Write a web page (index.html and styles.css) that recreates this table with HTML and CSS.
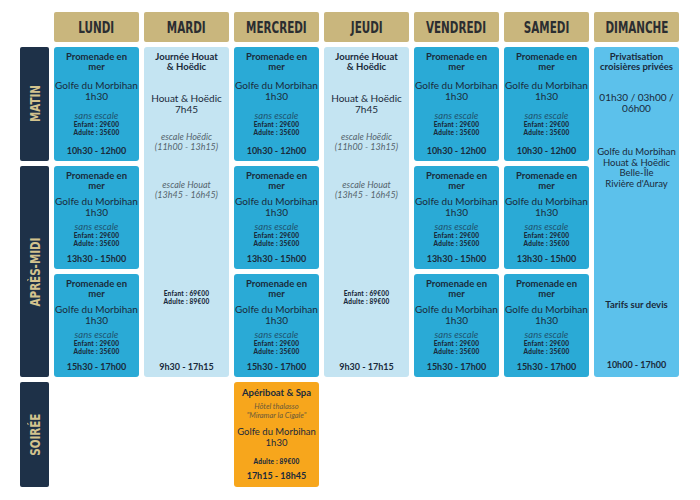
FILE: index.html
```html
<!DOCTYPE html>
<html lang="fr">
<head>
<meta charset="utf-8">
<title>Planning</title>
<link rel="stylesheet" href="styles.css">
</head>
<body>
<div class="planning">
  <div class="corner"></div>
  <div class="day"><span>LUNDI</span></div>
  <div class="day"><span>MARDI</span></div>
  <div class="day"><span>MERCREDI</span></div>
  <div class="day"><span>JEUDI</span></div>
  <div class="day"><span>VENDREDI</span></div>
  <div class="day"><span>SAMEDI</span></div>
  <div class="day"><span>DIMANCHE</span></div>

  <div class="period r1"><span>MATIN</span></div>
  <div class="period r2 span2"><span>APRÈS-MIDI</span></div>
  <div class="period r4"><span>SOIRÉE</span></div>

  <!-- MATIN -->
  <div class="cell promo c1 r1">
    <div class="ttl">Promenade en<br>mer</div>
    <div class="place">Golfe du Morbihan<br>1h30</div>
    <div class="esc"><div class="it">sans escale</div><div class="price">Enfant : 29€00<br>Adulte : 35€00</div></div>
    <div class="time">10h30 - 12h00</div>
  </div>
  <div class="cell day-trip c2 r1 span3">
    <div class="ttl">Journée Houat<br>&amp; Hoëdic</div>
    <div class="place dt-place">Houat &amp; Hoëdic<br>7h45</div>
    <div class="it dt-esc1">escale Hoëdic<br>(11h00 - 13h15)</div>
    <div class="it dt-esc2">escale Houat<br>(13h45 - 16h45)</div>
    <div class="price dt-price">Enfant : 69€00<br>Adulte : 89€00</div>
    <div class="time dt-time">9h30 - 17h15</div>
  </div>
  <div class="cell promo c3 r1">
    <div class="ttl">Promenade en<br>mer</div>
    <div class="place">Golfe du Morbihan<br>1h30</div>
    <div class="esc"><div class="it">sans escale</div><div class="price">Enfant : 29€00<br>Adulte : 35€00</div></div>
    <div class="time">10h30 - 12h00</div>
  </div>
  <div class="cell day-trip c4 r1 span3">
    <div class="ttl">Journée Houat<br>&amp; Hoëdic</div>
    <div class="place dt-place">Houat &amp; Hoëdic<br>7h45</div>
    <div class="it dt-esc1">escale Hoëdic<br>(11h00 - 13h15)</div>
    <div class="it dt-esc2">escale Houat<br>(13h45 - 16h45)</div>
    <div class="price dt-price">Enfant : 69€00<br>Adulte : 89€00</div>
    <div class="time dt-time">9h30 - 17h15</div>
  </div>
  <div class="cell promo c5 r1">
    <div class="ttl">Promenade en<br>mer</div>
    <div class="place">Golfe du Morbihan<br>1h30</div>
    <div class="esc"><div class="it">sans escale</div><div class="price">Enfant : 29€00<br>Adulte : 35€00</div></div>
    <div class="time">10h30 - 12h00</div>
  </div>
  <div class="cell promo c6 r1">
    <div class="ttl">Promenade en<br>mer</div>
    <div class="place">Golfe du Morbihan<br>1h30</div>
    <div class="esc"><div class="it">sans escale</div><div class="price">Enfant : 29€00<br>Adulte : 35€00</div></div>
    <div class="time">10h30 - 12h00</div>
  </div>
  <div class="cell private c7 r1 span3">
    <div class="ttl">Privatisation<br>croisières privées</div>
    <div class="place pv-dur">01h30 / 03h00 /<br>06h00</div>
    <div class="place pv-places">Golfe du Morbihan<br>Houat &amp; Hoëdic<br>Belle-Île<br>Rivière d'Auray</div>
    <div class="ttl pv-tarif">Tarifs sur devis</div>
    <div class="time pv-time">10h00 - 17h00</div>
  </div>

  <!-- APRES-MIDI 1 -->
  <div class="cell promo c1 r2">
    <div class="ttl">Promenade en<br>mer</div>
    <div class="place">Golfe du Morbihan<br>1h30</div>
    <div class="esc"><div class="it">sans escale</div><div class="price">Enfant : 29€00<br>Adulte : 35€00</div></div>
    <div class="time">13h30 - 15h00</div>
  </div>
  <div class="cell promo c3 r2">
    <div class="ttl">Promenade en<br>mer</div>
    <div class="place">Golfe du Morbihan<br>1h30</div>
    <div class="esc"><div class="it">sans escale</div><div class="price">Enfant : 29€00<br>Adulte : 35€00</div></div>
    <div class="time">13h30 - 15h00</div>
  </div>
  <div class="cell promo c5 r2">
    <div class="ttl">Promenade en<br>mer</div>
    <div class="place">Golfe du Morbihan<br>1h30</div>
    <div class="esc"><div class="it">sans escale</div><div class="price">Enfant : 29€00<br>Adulte : 35€00</div></div>
    <div class="time">13h30 - 15h00</div>
  </div>
  <div class="cell promo c6 r2">
    <div class="ttl">Promenade en<br>mer</div>
    <div class="place">Golfe du Morbihan<br>1h30</div>
    <div class="esc"><div class="it">sans escale</div><div class="price">Enfant : 29€00<br>Adulte : 35€00</div></div>
    <div class="time">13h30 - 15h00</div>
  </div>

  <!-- APRES-MIDI 2 -->
  <div class="cell promo c1 r3">
    <div class="ttl">Promenade en<br>mer</div>
    <div class="place">Golfe du Morbihan<br>1h30</div>
    <div class="esc"><div class="it">sans escale</div><div class="price">Enfant : 29€00<br>Adulte : 35€00</div></div>
    <div class="time">15h30 - 17h00</div>
  </div>
  <div class="cell promo c3 r3">
    <div class="ttl">Promenade en<br>mer</div>
    <div class="place">Golfe du Morbihan<br>1h30</div>
    <div class="esc"><div class="it">sans escale</div><div class="price">Enfant : 29€00<br>Adulte : 35€00</div></div>
    <div class="time">15h30 - 17h00</div>
  </div>
  <div class="cell promo c5 r3">
    <div class="ttl">Promenade en<br>mer</div>
    <div class="place">Golfe du Morbihan<br>1h30</div>
    <div class="esc"><div class="it">sans escale</div><div class="price">Enfant : 29€00<br>Adulte : 35€00</div></div>
    <div class="time">15h30 - 17h00</div>
  </div>
  <div class="cell promo c6 r3">
    <div class="ttl">Promenade en<br>mer</div>
    <div class="place">Golfe du Morbihan<br>1h30</div>
    <div class="esc"><div class="it">sans escale</div><div class="price">Enfant : 29€00<br>Adulte : 35€00</div></div>
    <div class="time">15h30 - 17h00</div>
  </div>

  <!-- SOIREE -->
  <div class="cell spa c3 r4">
    <div class="ttl">Apériboat &amp; Spa</div>
    <div class="it spa-hotel">Hôtel thalasso<br>"Miramar la Cigale"</div>
    <div class="place spa-place">Golfe du Morbihan<br>1h30</div>
    <div class="price spa-price">Adulte : 89€00</div>
    <div class="time spa-time">17h15 - 18h45</div>
  </div>
</div>
</body>
</html>
```

FILE: styles.css
```css
body {
  margin: 0;
  background: #ffffff;
  font-family: Lato, "Noto Sans", sans-serif;
  color: #1a2a3b;
}

.planning {
  display: grid;
  grid-template-columns: 29px repeat(7, 85px);
  grid-template-rows: 30px 114px 103px 103px 105px;
  gap: 5px;
  margin: 12px 0 0 20px;
}

.day {
  background: #c9b67d;
  border-radius: 2px;
  display: flex;
  align-items: center;
  justify-content: center;
  padding-top: 1px;
}
.day span {
  display: inline-block;
  transform: scaleX(0.77);
  font-family: "DejaVu Sans Condensed", "DejaVu Sans", sans-serif;
  font-weight: 700;
  font-size: 15px;
  color: #2b2d31;
  white-space: nowrap;
}

.period {
  grid-column: 1;
  background: #1e3148;
  border-radius: 2px;
  display: flex;
  align-items: center;
  justify-content: center;
}
.period span {
  writing-mode: vertical-rl;
  transform: rotate(180deg) scaleY(0.82);
  font-family: "DejaVu Sans Condensed", "DejaVu Sans", sans-serif;
  font-weight: 700;
  font-size: 14px;
  color: #d3c38e;
  white-space: nowrap;
}

.c1 { grid-column: 2; }
.c2 { grid-column: 3; }
.c3 { grid-column: 4; }
.c4 { grid-column: 5; }
.c5 { grid-column: 6; }
.c6 { grid-column: 7; }
.c7 { grid-column: 8; }
.r1 { grid-row: 2; }
.r2 { grid-row: 3; }
.r3 { grid-row: 4; }
.r4 { grid-row: 5; }
.r1.span3 { grid-row: 2 / span 3; }
.r2.span2 { grid-row: 3 / span 2; }

.cell {
  border-radius: 3px;
  text-align: center;
  display: flex;
  flex-direction: column;
  padding: 5px 0;
  white-space: nowrap;
}

.ttl { font-weight: 700; font-size: 9.5px; line-height: 10px; }
.place { font-size: 10px; line-height: 11px; }
.it { font-style: italic; font-size: 9.5px; line-height: 10px; color: #1f5470; }
.price { font-weight: 900; font-size: 6.5px; line-height: 8px; letter-spacing: 0.2px; }
.time { font-weight: 700; font-size: 9px; line-height: 11px; }

.promo {
  background: #2aaad6;
  justify-content: space-between;
}

.day-trip { background: #c4e4f2; }
.day-trip .it { color: #56646e; font-size: 9px; }
.dt-place { margin-top: 21px; }
.dt-esc1 { margin-top: 17px; }
.dt-esc2 { margin-top: 28px; }
.dt-price { margin-top: 90px; }
.dt-time { margin-top: 55px; }

.private { background: #5cc1eb; }
.pv-dur { margin-top: 20px; }
.pv-places { margin-top: 33px; font-size: 9.5px; line-height: 10.5px; }
.pv-tarif { margin-top: 111px; }
.pv-time { margin-top: 49px; }

.spa { background: #f7a61c; padding-top: 6px; }
.spa .it { color: #6b5a3a; font-size: 7.5px; line-height: 8.5px; }
.spa-hotel { margin-top: 5px; }
.spa-place { margin-top: 7px; line-height: 10.5px; font-size: 9.5px; }
.spa-price { margin-top: 10px; }
.spa-time { margin-top: 4px; }
```
